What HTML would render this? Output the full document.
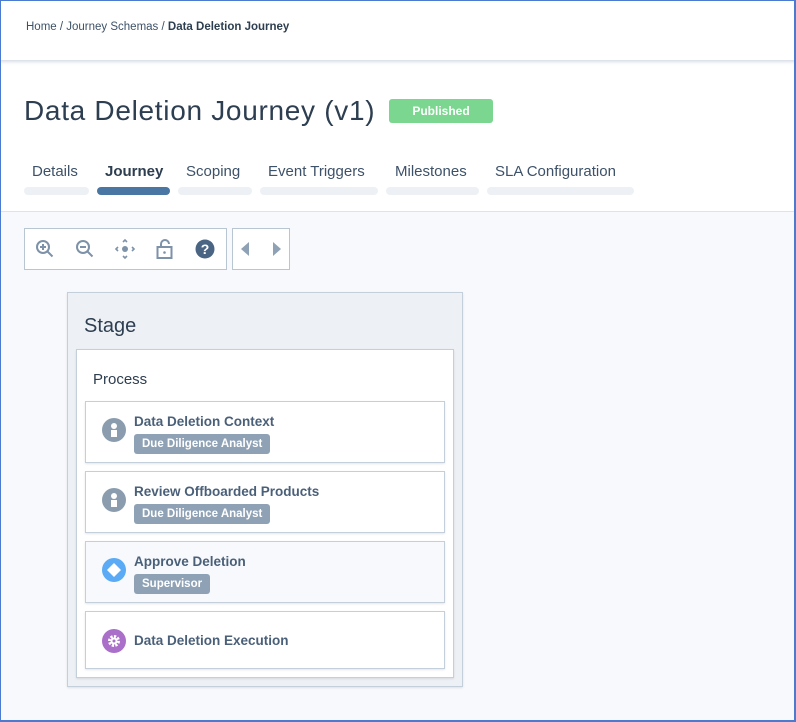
<!DOCTYPE html>
<html><head><meta charset="utf-8"><style>
*{box-sizing:border-box;margin:0;padding:0}
body{width:796px;height:722px;overflow:hidden;font-family:"Liberation Sans",sans-serif;background:#fff;position:relative}
.frame{position:absolute;left:0;top:0;width:796px;height:722px;border:1px solid #4a7bd0;border-right-width:2px;border-bottom-width:2px;pointer-events:none;z-index:10}
.hdr{position:absolute;left:0;top:0;width:796px;height:60px;background:#fff;box-shadow:0 2px 3px rgba(100,120,150,.25);z-index:2}
.bc{position:absolute;left:26px;top:21px;font-size:11.5px;color:#3d5168}
.bc b{color:#2d3e50}
.title{position:absolute;left:24px;top:95px;font-size:28px;color:#2d3e50;letter-spacing:.7px}
.badge{position:absolute;left:389px;top:99px;width:104px;height:24px;background:#7bd68f;border-radius:3px;color:#fff;font-weight:bold;font-size:12px;text-align:center;line-height:24px}
.tab{position:absolute;top:163px;font-size:15px;color:#3d5168}
.bar{position:absolute;top:187px;height:8px;border-radius:4px;background:#edf1f5}
.sep{position:absolute;left:0;top:211px;width:796px;height:1px;background:#dde3ea}
.canvas{position:absolute;left:0;top:212px;width:796px;height:510px;background:#f7f9fc}
.tb{position:absolute;top:228px;height:42px;border:1px solid #b8c5d3;background:#fff}
.ic{position:absolute;top:238px}
.stage{position:absolute;left:67px;top:292px;width:396px;height:395px;background:#edf1f5;border:1px solid #c3cfdb;box-shadow:0 1px 2px rgba(0,0,0,.1)}
.stage h2{position:absolute;left:16px;top:22px;font-weight:normal;font-size:20px;color:#2d3e50}
.proc{position:absolute;left:76px;top:349px;width:378px;height:329px;background:#fff;border:1px solid #c3cfdb;box-shadow:0 1px 2px rgba(0,0,0,.1)}
.proc .pt{position:absolute;left:16px;top:21px;font-size:15px;color:#2d3e50}
.card{position:absolute;left:85px;width:360px;background:#fff;border:1px solid #c3cfdb;box-shadow:0 1px 2px rgba(0,0,0,.1)}
.card .t{position:absolute;left:48px;font-size:13.5px;font-weight:bold;color:#4a5f78}
.card .r{position:absolute;left:48px;top:32px;height:20px;padding:0 8px;background:#8fa2b5;border-radius:3px;color:#fff;font-size:11.5px;font-weight:bold;line-height:20px}
.card svg{position:absolute;left:16px}
</style></head><body>
<div class="frame"></div>
<div class="hdr"><div class="bc">Home / Journey Schemas / <b>Data Deletion Journey</b></div></div>
<div class="title">Data Deletion Journey (v1)</div>
<div class="badge">Published</div>
<div class="tab" style="left:32px">Details</div>
<div class="tab" style="left:105px;font-weight:bold;color:#2d3e50">Journey</div>
<div class="tab" style="left:186px">Scoping</div>
<div class="tab" style="left:268px">Event Triggers</div>
<div class="tab" style="left:395px">Milestones</div>
<div class="tab" style="left:495px">SLA Configuration</div>
<div class="bar" style="left:24px;width:65px"></div>
<div class="bar" style="left:97px;width:73px;background:#4a76a3"></div>
<div class="bar" style="left:178px;width:74px"></div>
<div class="bar" style="left:260px;width:118px"></div>
<div class="bar" style="left:386px;width:93px"></div>
<div class="bar" style="left:487px;width:147px"></div>
<div class="sep"></div>
<div class="canvas"></div>
<div class="tb" style="left:24px;width:203px"></div>
<div class="tb" style="left:232px;width:58px"></div>
<svg class="ic" style="left:34px" width="22" height="22" viewBox="0 0 22 22" fill="none" stroke="#7d92a8" stroke-width="2"><circle cx="9" cy="9" r="6"/><path d="M13.5 13.5l5 5M9 6v6M6 9h6"/></svg>
<svg class="ic" style="left:74px" width="22" height="22" viewBox="0 0 22 22" fill="none" stroke="#7d92a8" stroke-width="2"><circle cx="9" cy="9" r="6"/><path d="M13.5 13.5l5 5M6 9h6"/></svg>
<svg class="ic" style="left:114px" width="22" height="22" viewBox="0 0 22 22" fill="none" stroke="#7d92a8" stroke-width="1.6"><circle cx="11" cy="11" r="3" fill="#7d92a8" stroke="none"/><path d="M9 4l2-2 2 2M9 18l2 2 2-2M4 9l-2 2 2 2M18 9l2 2-2 2"/></svg>
<svg class="ic" style="left:154px" width="22" height="22" viewBox="0 0 22 22" fill="none" stroke="#7d92a8" stroke-width="2"><path d="M7 9V6a4 4 0 0 1 8 0"/><rect x="3.5" y="9" width="14" height="11"/><circle cx="10.5" cy="14.5" r="1.3" fill="#7d92a8" stroke="none"/></svg>
<svg class="ic" style="left:194px" width="22" height="22" viewBox="0 0 22 22"><circle cx="11" cy="11" r="9.5" fill="#4a6584"/><text x="11" y="16" text-anchor="middle" font-family="Liberation Sans" font-weight="bold" font-size="14" fill="#fff">?</text></svg>
<svg class="ic" style="left:238px" width="14" height="22" viewBox="0 0 14 22"><path d="M11 4v14L3 11z" fill="#8fa2b5"/></svg>
<svg class="ic" style="left:270px" width="14" height="22" viewBox="0 0 14 22"><path d="M3 4v14l8-7z" fill="#8fa2b5"/></svg>
<div class="stage"><h2>Stage</h2></div>
<div class="proc"><div class="pt">Process</div></div>
<div class="card" style="top:401px;height:62px"><svg style="top:16px" width="24" height="24" viewBox="0 0 24 24"><circle cx="12" cy="12" r="12" fill="#8a9cae"/><circle cx="12" cy="8" r="3" fill="#fff"/><rect x="9" y="12" width="6" height="7" fill="#fff"/></svg><div class="t" style="top:12px">Data Deletion Context</div><div class="r">Due Diligence Analyst</div></div>
<div class="card" style="top:471px;height:62px"><svg style="top:16px" width="24" height="24" viewBox="0 0 24 24"><circle cx="12" cy="12" r="12" fill="#8a9cae"/><circle cx="12" cy="8" r="3" fill="#fff"/><rect x="9" y="12" width="6" height="7" fill="#fff"/></svg><div class="t" style="top:12px">Review Offboarded Products</div><div class="r">Due Diligence Analyst</div></div>
<div class="card" style="top:541px;height:62px;background:#f7f9fc"><svg style="top:16px" width="24" height="24" viewBox="0 0 24 24"><circle cx="12" cy="12" r="12" fill="#5aaaf5"/><path d="M12 5l7 7-7 7-7-7z" fill="#fff"/></svg><div class="t" style="top:12px">Approve Deletion</div><div class="r">Supervisor</div></div>
<div class="card" style="top:611px;height:58px"><svg style="top:17px" width="24" height="24" viewBox="0 0 24 24"><circle cx="12" cy="12" r="12" fill="#a96fc9"/><circle cx="12" cy="12" r="4.5" fill="none" stroke="#fff" stroke-width="3" stroke-dasharray="2.2 1.3"/><circle cx="12" cy="12" r="3.5" fill="#fff"/><circle cx="12" cy="12" r="1.5" fill="#a96fc9"/></svg><div class="t" style="top:21px">Data Deletion Execution</div></div>
</body></html>
